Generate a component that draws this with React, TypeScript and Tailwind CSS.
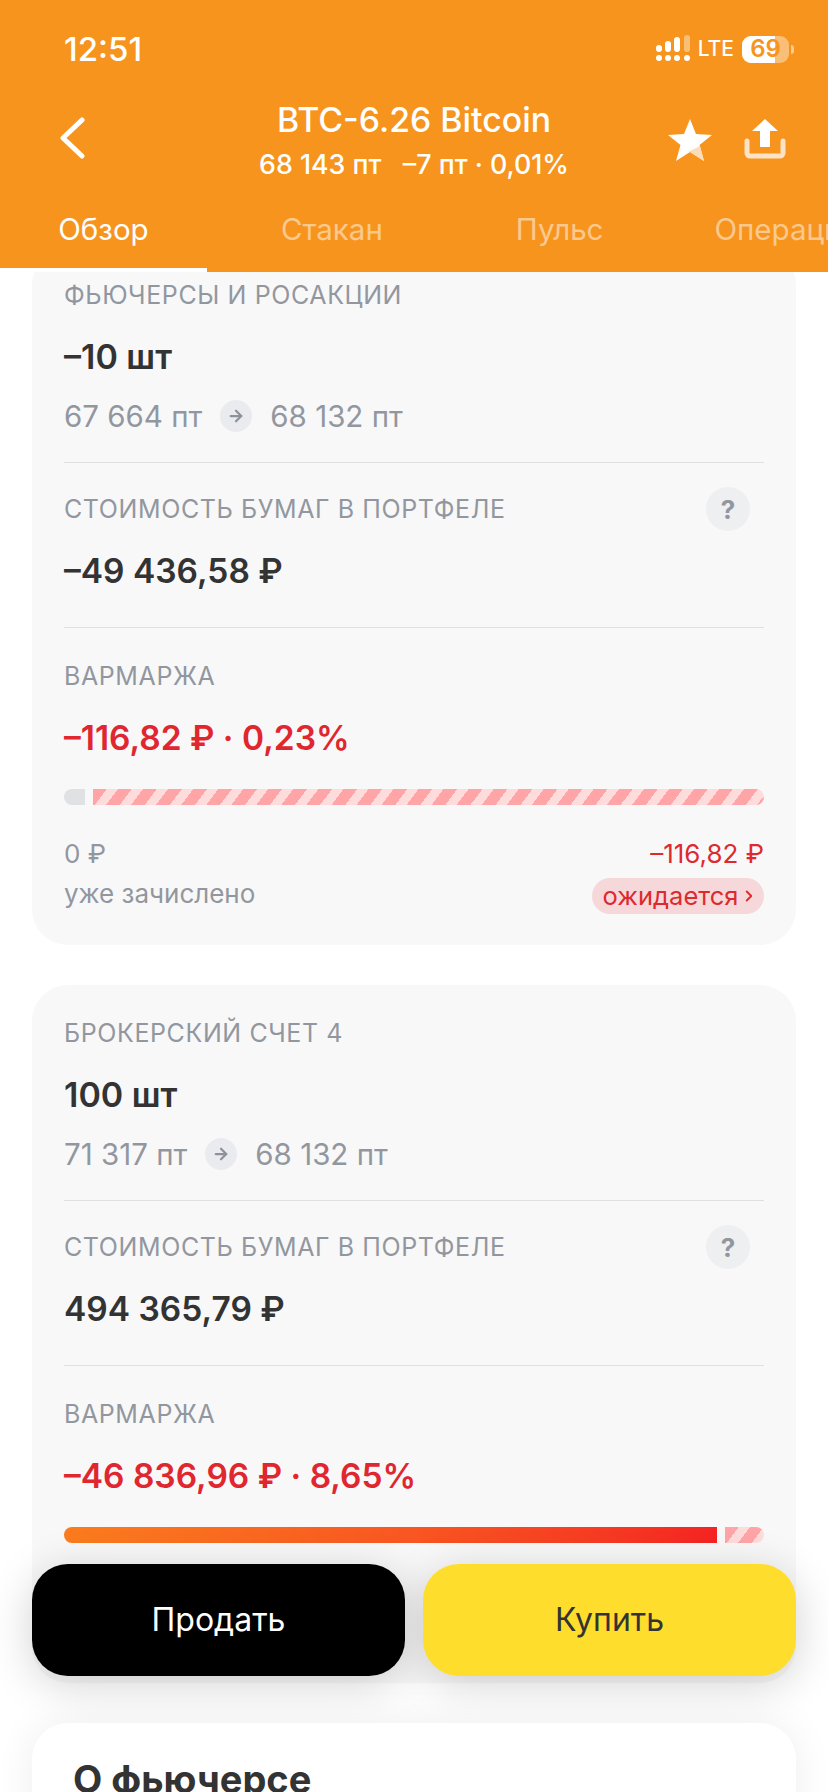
import { ArrowRight, ChevronRight } from 'lucide-react';
import { clsx } from 'clsx';

const stripes =
  'bg-[repeating-linear-gradient(127deg,#ffa5a8_0px,#ffa5a8_11px,#ffdcdc_11px,#ffdcdc_20px)]';

function SignalIcon() {
  return (
    <svg width="36" height="28" viewBox="0 0 36 28" fill="#fff">
      <rect x="0" y="10" width="6" height="7" rx="3" />
      <rect x="9" y="6" width="6" height="11" rx="3" />
      <rect x="18" y="2" width="6" height="15" rx="3" />
      <rect x="28" y="0" width="6" height="17" rx="3" fillOpacity="0.4" />
      <circle cx="3" cy="23" r="3" />
      <circle cx="12" cy="23" r="3" />
      <circle cx="21" cy="23" r="3" />
      <circle cx="31" cy="23" r="3" />
    </svg>
  );
}

function Battery() {
  return (
    <div className="flex items-center gap-[2px]">
      <div className="relative w-[47px] h-[27px] rounded-[9px] overflow-hidden bg-white/40">
        <div className="h-full w-[33px] bg-white" />
        <span className="absolute inset-0 flex items-center justify-center text-[24px] font-semibold text-[#f7941d] leading-none">
          69
        </span>
      </div>
      <div className="w-[3px] h-[9px] rounded-r-sm bg-white/50" />
    </div>
  );
}

function BackIcon() {
  return (
    <svg width="26" height="42" viewBox="0 0 26 42" fill="none" stroke="#fff" strokeWidth="5" strokeLinecap="round" strokeLinejoin="round">
      <path d="M23 3L4 21l19 18" />
    </svg>
  );
}

function StarIcon() {
  return (
    <svg width="44" height="42" viewBox="0 0 44 42">
      <path d="M22 0l6 15 16 1-12.500 10L36 42 22 33 8 42l4.500-16L0 16l16-1z" fill="#fff" />
      <path d="M22 33l14 9-4-15-12 6z" fill="#fbdcb6" />
    </svg>
  );
}

function ShareIcon() {
  return (
    <svg width="42" height="40" viewBox="0 0 42 40">
      <path d="M3 22v12a3 3 0 0 0 3 3h30a3 3 0 0 0 3-3V22" fill="none" stroke="#fde3c5" strokeWidth="5" strokeLinecap="round" />
      <path d="M21 0l13 12h-8v16h-10v-16H8z" fill="#fff" />
    </svg>
  );
}

function Header() {
  const tabs = [
    { label: 'Обзор', cls: 'w-[207px] justify-center text-white' },
    { label: 'Стакан', cls: 'ml-[74px] text-white/50' },
    { label: 'Пульс', cls: 'ml-[133px] text-white/50' },
    { label: 'Операции', cls: 'ml-[111px] text-white/50' },
  ];

  return (
    <div className="bg-[#f7941d] h-[272px] shrink-0 text-white flex flex-col">
      <div className="flex items-center justify-between pl-[64px] pr-[34px] pt-[30px] h-[68px]">
        <span className="text-[33px] font-medium leading-[38px]">12:51</span>
        <div className="flex items-center">
          <SignalIcon />
          <span className="ml-[6px] mr-[8px] text-[21px] font-medium">LTE</span>
          <Battery />
        </div>
      </div>
      <div className="grid grid-cols-[160px_1fr_160px] mt-[32px] h-[84px]">
        <div className="pl-[59px] pt-[17px]">
          <BackIcon />
        </div>
        <div className="text-center">
          <div className="text-[33.800px] font-medium leading-[40px] whitespace-nowrap">BTC-6.26 Bitcoin</div>
          <div className="text-[26.800px] font-medium leading-[32px] mt-[8px] whitespace-pre">68 143 пт   –7 пт · 0,01%</div>
        </div>
        <div className="flex items-start pt-[19px] gap-[32px]">
          <StarIcon />
          <ShareIcon />
        </div>
      </div>
      <div className="flex flex-1 overflow-hidden mt-[3px] pb-[1px] text-[29.500px] whitespace-nowrap">
        {tabs.map((tab, i) => (
          <div key={tab.label} className={clsx('relative flex items-center shrink-0', tab.cls)}>
            {tab.label}
            {i === 0 && <div className="absolute left-0 right-0 -bottom-[1px] h-1 bg-white" />}
          </div>
        ))}
      </div>
    </div>
  );
}

function Label({ children }: { children: string }) {
  return <div className="text-[25px] leading-[28px] uppercase text-[#92979f] tracking-[0.6px]">{children}</div>;
}

function Section({ title, value, red, help }: { title: string; value: string; red?: boolean; help?: boolean }) {
  return (
    <div>
      <div className="flex items-center justify-between">
        <Label>{title}</Label>
        {help && (
          <div className="w-[44px] h-[44px] -my-[8px] mr-[14px] rounded-full bg-[#eeeff1] flex items-center justify-center text-[26px] font-bold text-[#92979f]">
            ?
          </div>
        )}
      </div>
      <div className={clsx('mt-[28px] text-[33.500px] leading-[40px] font-semibold', red ? 'text-[#e0262f]' : 'text-[#333333]')}>
        {value}
      </div>
    </div>
  );
}

function Position(props: {
  account: string;
  qty: string;
  from: string;
  to: string;
  cost: string;
  margin: string;
  barFill: string;
  children?: React.ReactNode;
  className?: string;
}) {
  return (
    <div className={clsx('mx-8 bg-[#f8f8f9] rounded-[36px] px-8', props.className)}>
      <Label>{props.account}</Label>
      <div className="mt-[28px] text-[34px] leading-[40px] font-semibold text-[#333333]">{props.qty}</div>
      <div className="mt-[21px] h-[36px] flex items-center gap-[18px] text-[29.500px] text-[#92979f]">
        <span>{props.from}</span>
        <div className="w-8 h-8 rounded-full bg-[#eaebee] flex items-center justify-center">
          <ArrowRight size={18} strokeWidth={3} className="text-[#8d9199]" />
        </div>
        <span>{props.to}</span>
      </div>
      <div className="mt-[28px] border-t border-[#dfe0e2] pt-[32px] pb-[36px]">
        <Section title="Стоимость бумаг в портфеле" value={props.cost} help />
      </div>
      <div className="border-t border-[#dfe0e2] pt-[34px]">
        <Section title="Вармаржа" value={props.margin} red />
      </div>
      <div className="mt-[31px] flex h-4 gap-2">
        {props.barFill === 'empty' ? (
          <>
            <div className="w-[21px] rounded-l-lg bg-[#dfe1e3]" />
            <div className={clsx('flex-1 rounded-r-lg', stripes)} />
          </>
        ) : (
          <>
            <div className="flex-1 rounded-l-lg bg-gradient-to-r from-[#fb7c1e] to-[#f52323]" />
            <div className={clsx('w-[39px] rounded-r-lg', stripes)} />
          </>
        )}
      </div>
      {props.children}
    </div>
  );
}

export default function App() {
  return (
    <div className="relative w-[828px] h-[1792px] overflow-hidden bg-white flex flex-col font-['Inter',sans-serif]">
      <Header />
      <div className="flex-1 overflow-hidden">
        <div className="-mt-[23px] flex flex-col">
          <Position
            account="Фьючерсы и росакции"
            qty="–10 шт"
            from="67 664 пт"
            to="68 132 пт"
            cost="–49 436,58 ₽"
            margin="–116,82 ₽ · 0,23%"
            barFill="empty"
            className="pt-8 pb-[31px]"
          >
            <div className="mt-[35px] flex justify-between text-[26px] leading-[28px]">
              <div className="text-[#92979f]">
                <div>0 ₽</div>
                <div className="mt-[12px]">уже зачислено</div>
              </div>
              <div className="flex flex-col items-end text-[#dc2a2f]">
                <div>–116,82 ₽</div>
                <div className="mt-[10px] h-[36px] w-[172px] pl-[5px] rounded-full bg-[#f6d8da] text-[25.500px] flex items-center justify-center">
                  ожидается
                  <ChevronRight size={18} strokeWidth={2.5} className="ml-[2px]" />
                </div>
              </div>
            </div>
          </Position>
          <Position
            account="Брокерский счет 4"
            qty="100 шт"
            from="71 317 пт"
            to="68 132 пт"
            cost="494 365,79 ₽"
            margin="–46 836,96 ₽ · 8,65%"
            barFill="full"
            className="mt-[40px] pt-[34px] pb-[140px]"
          />
          <div className="relative z-10 mt-[40px] mx-8 bg-white rounded-[36px] px-[41px] pt-[34px] pb-10 shadow-[0_0_40px_rgba(0,0,0,0.07)]">
            <div className="text-[38px] leading-[44px] font-bold text-[#333333]">О фьючерсе</div>
          </div>
        </div>
      </div>
      <div className="absolute left-8 right-8 top-[1564px] h-[112px] flex gap-[18px] text-[32px]">
        <button className="flex-1 rounded-[36px] bg-black text-white shadow-[0_8px_44px_rgba(0,0,0,0.18)]">Продать</button>
        <button className="flex-1 rounded-[36px] bg-[#ffdd2d] text-[#333333] shadow-[0_8px_44px_rgba(0,0,0,0.18)]">Купить</button>
      </div>
    </div>
  );
}
